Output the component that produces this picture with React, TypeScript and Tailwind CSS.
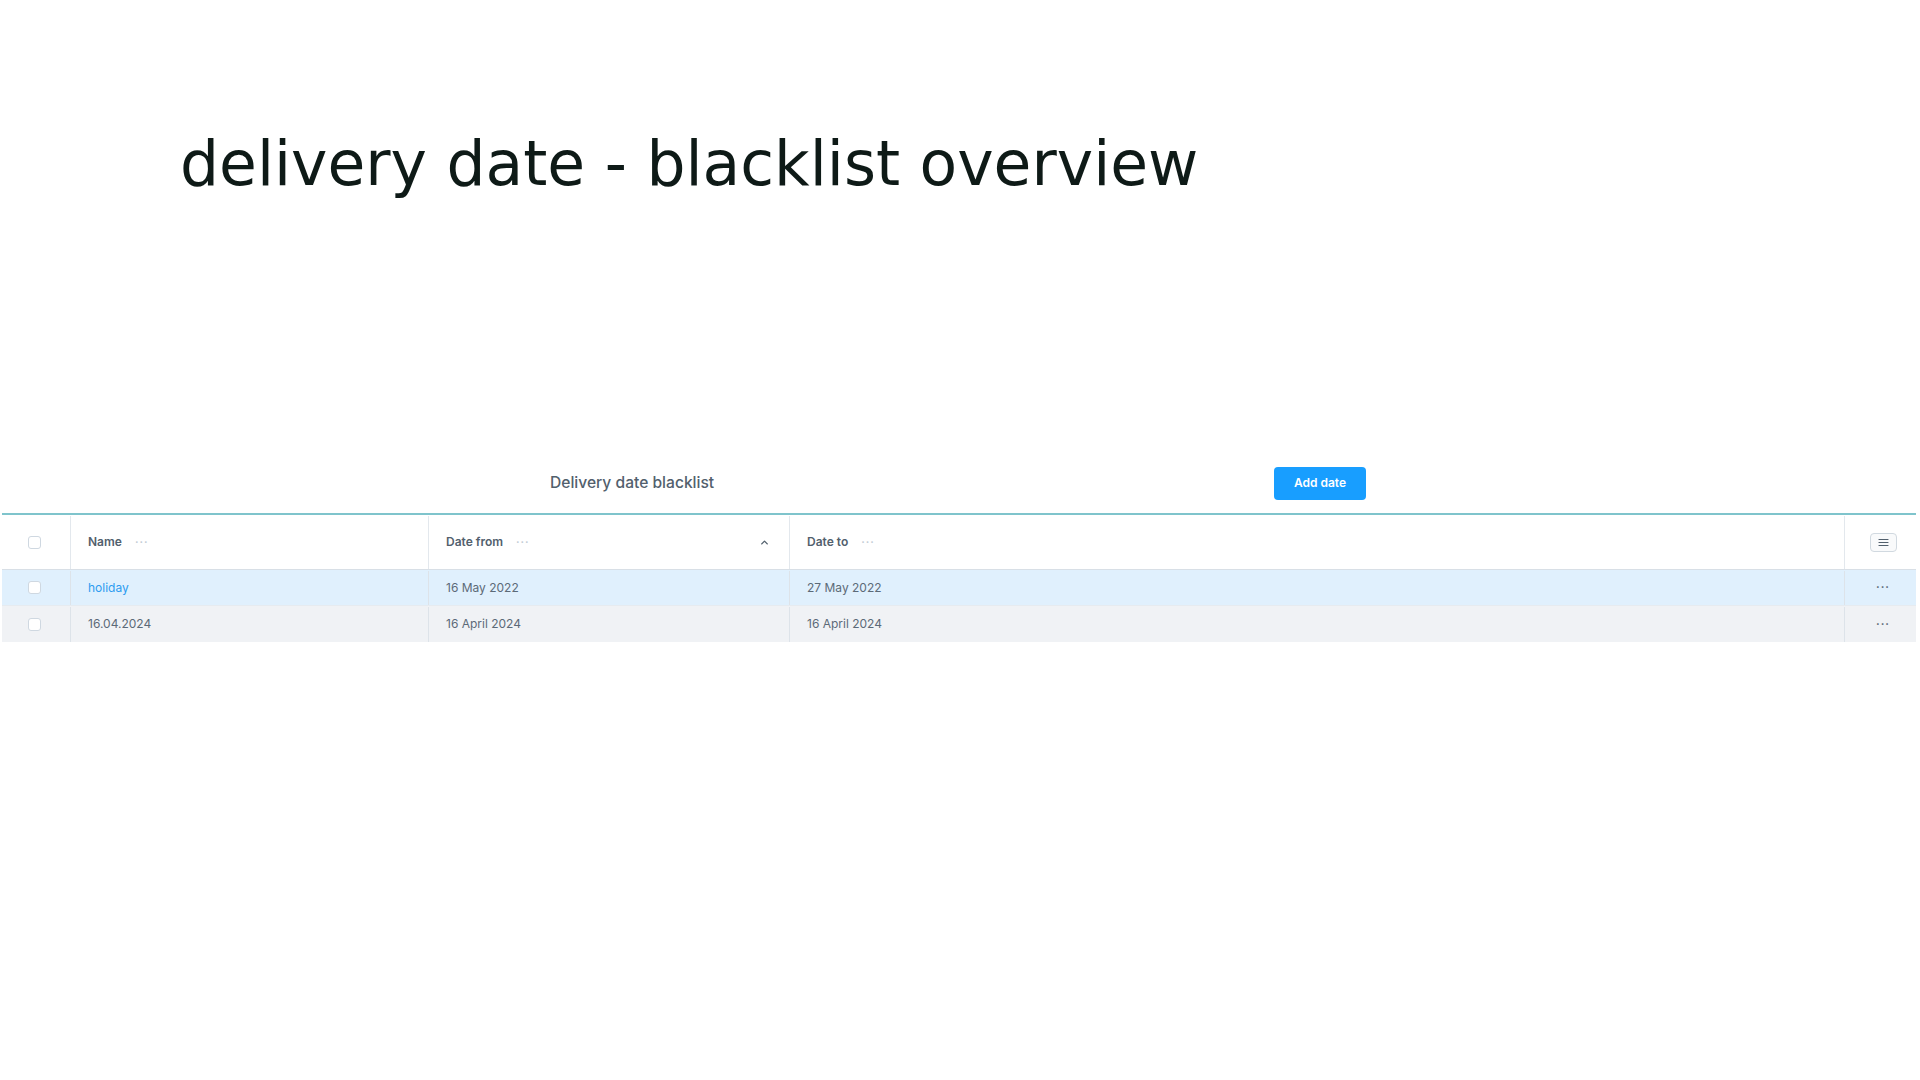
import { ChevronUp } from "lucide-react";

const rows = [
  { name: "holiday", from: "16 May 2022", to: "27 May 2022", link: true },
  { name: "16.04.2024", from: "16 April 2024", to: "16 April 2024", link: false },
];

function Checkbox() {
  return <span className="block h-[13px] w-[13px] rounded-[3px] border border-[#cfd8e1] bg-white" />;
}

function Dots({ className = "" }: { className?: string }) {
  return <span className={`text-[11px] leading-none tracking-[1px] ${className}`}>···</span>;
}

export default function App() {
  return (
    <div className="min-h-screen bg-white font-['Inter',sans-serif]">
      <h1 className="pl-[180px] pt-[134px] font-['DejaVu_Sans',sans-serif] text-[61.5px] leading-none font-normal text-[#0e1a17]">
        delivery date - blacklist overview
      </h1>

      <div className="ml-[550px] mt-[271px] flex h-[33px] w-[816px] items-center justify-between">
        <h2 className="text-[15.6px] font-medium text-[#52606d]">Delivery date blacklist</h2>
        <button className="h-[33px] w-[92px] rounded-[4px] bg-[#189eff] text-[12px] font-semibold text-white">
          Add date
        </button>
      </div>

      <div className="ml-[2px] mt-[13px] w-[1914px] border-t-2 border-[#7fc4cc] text-[12px]">
        <div className="flex h-[55px] border-b border-[#d8dfe6] pt-[1px] font-semibold text-[#52606d]">
          <div className="flex w-[69px] items-center justify-center border-r border-[#e3e8ed] pr-[4px]">
            <Checkbox />
          </div>
          <div className="flex w-[358px] items-center gap-[13px] border-r border-[#e3e8ed] pl-[17px]">
            Name <Dots className="text-[#c3ccd5]" />
          </div>
          <div className="flex w-[361px] items-center border-r border-[#e3e8ed] pl-[17px] pr-[19px]">
            <span>Date from</span>
            <Dots className="ml-[13px] text-[#c3ccd5]" />
            <ChevronUp className="ml-auto h-[11px] w-[11px] text-[#52606d]" strokeWidth={3} />
          </div>
          <div className="flex w-[1055px] items-center gap-[13px] border-r border-[#e3e8ed] pl-[17px]">
            Date to <Dots className="text-[#c3ccd5]" />
          </div>
          <div className="flex flex-1 items-center justify-center pl-[5px]">
            <span className="flex h-[19px] w-[27px] items-center justify-center rounded-[4px] border border-[#d1d9e0] bg-[#f9fafb]">
              <svg width="11" height="9" viewBox="0 0 11 9" className="text-[#52606d]">
                <path d="M1 1.5h9M1 4.5h9M1 7.5h9" stroke="currentColor" strokeWidth="1.2" strokeLinecap="round" />
              </svg>
            </span>
          </div>
        </div>

        {rows.map((r, i) => (
          <div
            key={r.name}
            className={`flex h-[36px] pt-[1px] text-[#5c6a78] ${i === 0 ? "bg-[#e0f0fd] border-b border-[#e6ebf0]" : "bg-[#f0f2f5]"}`}
          >
            <div className="flex w-[69px] items-center justify-center border-r border-[#dde3e9] pr-[4px]">
              <Checkbox />
            </div>
            <div className={`flex w-[358px] items-center border-r border-[#dde3e9] pl-[17px] ${r.link ? "text-[#2d9cf0]" : ""}`}>
              {r.name}
            </div>
            <div className="flex w-[361px] items-center border-r border-[#dde3e9] pl-[17px]">{r.from}</div>
            <div className="flex w-[1055px] items-center border-r border-[#dde3e9] pl-[17px]">{r.to}</div>
            <div className="flex flex-1 items-center justify-center pl-[5px]">
              <Dots className="font-bold text-[#52606d]" />
            </div>
          </div>
        ))}
      </div>
    </div>
  );
}
